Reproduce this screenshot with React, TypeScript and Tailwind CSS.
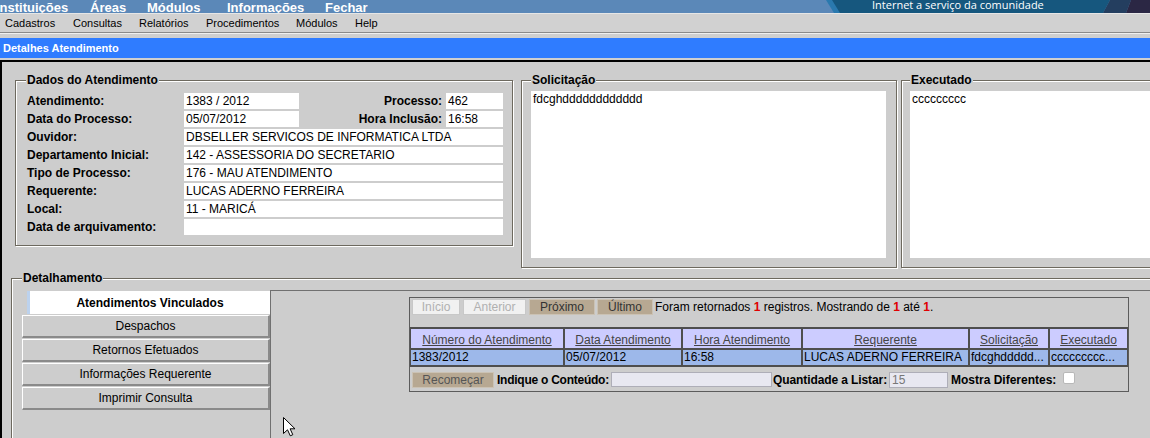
import React from "react";

const groove = "border border-[#6d695f] shadow-[inset_1px_1px_0_#ffffff,1px_1px_0_#ffffff]";

function Row({ label, children }: { label: string; children: React.ReactNode }) {
  return (
    <div className="flex h-[16px] items-center">
      <div className="w-[157px] text-[12px] font-bold leading-[16px] whitespace-nowrap">{label}</div>
      <div className="flex h-[16px] flex-1 items-center">{children}</div>
    </div>
  );
}

function Inp({ v, w }: { v: string; w?: string }) {
  return (
    <div className={`${w ?? "flex-1"} h-[16px] bg-white px-[2px] text-[12px] leading-[16px] whitespace-nowrap overflow-hidden`}>{v}</div>
  );
}

function Dados() {
  return (
    <fieldset className={`ml-[13px] w-[498px] shrink-0 ${groove} pl-[11px] pr-[9px] pb-[10px]`}>
      <legend className="-ml-[1px] bg-[#cdcdcd] px-[1px] text-[12px] font-bold leading-[14px]">Dados do Atendimento</legend>
      <div className="mt-[6px] flex flex-col gap-[2px]">
        <Row label="Atendimento:">
          <Inp v="1383 / 2012" w="w-[115px]" />
          <div className="flex-1 text-right text-[12px] font-bold">Processo:</div>
          <Inp v="462" w="ml-[4px] w-[57px]" />
        </Row>
        <Row label="Data do Processo:">
          <Inp v="05/07/2012" w="w-[115px]" />
          <div className="flex-1 text-right text-[12px] font-bold">Hora Inclusão:</div>
          <Inp v="16:58" w="ml-[4px] w-[57px]" />
        </Row>
        <Row label="Ouvidor:"><Inp v="DBSELLER SERVICOS DE INFORMATICA LTDA" /></Row>
        <Row label="Departamento Inicial:"><Inp v="142 - ASSESSORIA DO SECRETARIO" /></Row>
        <Row label="Tipo de Processo:"><Inp v="176 - MAU ATENDIMENTO" /></Row>
        <Row label="Requerente:"><Inp v="LUCAS ADERNO FERREIRA" /></Row>
        <Row label="Local:"><Inp v="11 - MARICÁ" /></Row>
        <Row label="Data de arquivamento:"><Inp v="" /></Row>
      </div>
    </fieldset>
  );
}

function TextBox({ title, text, cls }: { title: string; text: string; cls: string }) {
  return (
    <fieldset className={`${cls} shrink-0 ${groove} pb-[9px]`}>
      <legend className="bg-[#cdcdcd] px-[1px] text-[12px] font-bold leading-[14px]">{title}</legend>
      <div className="mt-[4px] h-[167px] bg-white px-[2px] pt-[1px] text-[12px] leading-[14px]">{text}</div>
    </fieldset>
  );
}

const tabBtn =
  "flex h-[23px] w-[248px] items-center justify-center text-[12px] border-t border-l border-r-2 border-b-2 border-t-white border-l-white border-r-[#8a8a8a] border-b-[#8a8a8a] bg-[#cdcdcd]";

const pgBase = "flex h-[16px] items-center justify-center border text-[12px]";
const tan = "bg-[#b7a892] border-[#cbc2b4] text-[#333333]";

const cols = [
  { h: "Número do Atendimento", d: "1383/2012", w: "w-[152px]" },
  { h: "Data Atendimento", d: "05/07/2012", w: "w-[116px]" },
  { h: "Hora Atendimento", d: "16:58", w: "w-[118px]" },
  { h: "Requerente", d: "LUCAS ADERNO FERREIRA", w: "w-[165px]" },
  { h: "Solicitação", d: "fdcghddddd...", w: "w-[78px]" },
  { h: "Executado", d: "ccccccccc...", w: "w-[77px]" },
];

function Grid() {
  return (
    <div className="ml-[138px] mt-[6px] w-[720px] border border-[#5c5c5c]">
      <div className="flex h-[29px] items-start pl-[2px] pt-[1px]">
        <span className={`${pgBase} w-[48px] bg-[#f1f1f1] border-[#c8c8c8] text-[#b0b0b0]`}>Início</span>
        <span className={`${pgBase} ml-[3px] w-[63px] bg-[#f1f1f1] border-[#c8c8c8] text-[#b0b0b0]`}>Anterior</span>
        <span className={`${pgBase} ml-[3px] w-[66px] ${tan}`}>Próximo</span>
        <span className={`${pgBase} ml-[2px] w-[56px] ${tan}`}>Último</span>
        <span className="ml-[2px] whitespace-nowrap text-[12px] leading-[16px]">
          Foram retornados <b className="text-[#e00000]">1</b> registros. Mostrando de <b className="text-[#e00000]">1</b> até{" "}
          <b className="text-[#e00000]">1</b>.
        </span>
      </div>
      <div className="flex flex-col gap-[2px] bg-[#4e4e4e] px-[1px] py-[2px]">
        <div className="flex h-[19px] gap-[2px]">
          {cols.map((c) => (
            <div key={c.h} className={`${c.w} flex items-center justify-center bg-[#ccccff] pt-[2px] text-[12px] text-[#444444] underline whitespace-nowrap`}>
              {c.h}
            </div>
          ))}
        </div>
        <div className="flex h-[15px] gap-[2px]">
          {cols.map((c) => (
            <div key={c.h} className={`${c.w} overflow-hidden bg-[#9db8ea] pl-[1px] text-[12px] leading-[15px] whitespace-nowrap`}>
              {c.d}
            </div>
          ))}
        </div>
      </div>
      <div className="flex h-[24px] items-start pl-[2px] pt-[5px] text-[12px]">
        <span className={`${pgBase} w-[82px] ${tan} text-[#555555]`}>Recomeçar</span>
        <span className="ml-[3px] w-[114px] whitespace-nowrap font-bold leading-[16px] tracking-[-0.25px]">Indique o Conteúdo:</span>
        <span className="h-[15px] w-[161px] border border-[#aeaeb8] bg-[#e8e8f1]" />
        <span className="ml-[1px] w-[116px] whitespace-nowrap font-bold leading-[16px] tracking-[-0.1px]">Quantidade a Listar:</span>
        <span className="h-[16px] w-[59px] border border-[#aeaeb8] bg-[#e8e8f1] pl-[2px] leading-[14px] text-[#777777]">15</span>
        <span className="ml-[3px] w-[110px] whitespace-nowrap font-bold leading-[16px]">Mostra Diferentes:</span>
        <span className="ml-[2px] h-[12px] w-[12px] rounded-[2px] border border-[#b8b8b8] bg-white" />
      </div>
    </div>
  );
}

function Detalhamento() {
  return (
    <fieldset className={`ml-[9px] mt-[3px] h-[220px] w-[1170px] shrink-0 ${groove} pl-[10px]`}>
      <legend className="bg-[#cdcdcd] px-[1px] text-[12px] font-bold leading-[14px]">Detalhamento</legend>
      <div className="mt-[5px] flex items-start">
        <div className="mt-[1px] flex w-[248px] shrink-0 flex-col gap-[1px]">
          <div className="ml-[5px] flex h-[23px] w-[243px] items-center justify-center border-l-[3px] border-[#bcd2ee] bg-white text-[12px] font-bold">
            Atendimentos Vinculados
          </div>
          <div className={tabBtn}>Despachos</div>
          <div className={tabBtn}>Retornos Efetuados</div>
          <div className={tabBtn}>Informações Requerente</div>
          <div className={tabBtn}>Imprimir Consulta</div>
        </div>
        <div className="h-[200px] flex-1 border-l border-t border-[#707070]">
          <Grid />
        </div>
      </div>
    </fieldset>
  );
}

export default function App() {
  return (
    <div className="relative h-[438px] w-[1150px] overflow-hidden bg-[#cdcdcd] font-['Liberation_Sans',Arial,sans-serif] text-black">
      <div className="relative h-[13px] overflow-hidden bg-[#5b88b8]">
        <svg className="absolute left-0 top-0" width="1150" height="13" viewBox="0 0 1150 13">
          <polygon points="826,0 834,0 842,13 834,13" fill="#2a79ae" />
          <polygon points="832,0 1110,0 1103,13 840,13" fill="#16577e" />
          <polygon points="1110,0 1131,0 1126,13 1103,13" fill="#243e5f" />
          <polygon points="1131,0 1150,0 1150,13 1126,13" fill="#2b2744" />
        </svg>
        <div className="relative flex h-[13px] items-start">
          <div className="flex w-[872px] pt-[1px] text-[13px] font-bold leading-[13px] text-white">
            <span className="-ml-[4px] w-[94px] whitespace-nowrap">Instituições</span>
            <span className="w-[57px]">Áreas</span>
            <span className="w-[80px]">Módulos</span>
            <span className="w-[98px]">Informações</span>
            <span>Fechar</span>
          </div>
          <span className="whitespace-nowrap font-['Open_Sans'] text-[11px] leading-[10px] text-white">Internet a serviço da comunidade</span>
        </div>
      </div>
      <div className="flex h-[20px] items-center border-b border-t border-b-[#8a8a8a] border-t-[#e6e6e6] bg-[#d1d1d1] pl-[5px] text-[11px]">
        <span className="w-[68px]">Cadastros</span>
        <span className="w-[66px]">Consultas</span>
        <span className="w-[67px]">Relatórios</span>
        <span className="w-[90px]">Procedimentos</span>
        <span className="w-[59px]">Módulos</span>
        <span>Help</span>
      </div>
      <div className="h-[5px] border-t border-[#f0f0f0] bg-[#cfcfcf]" />
      <div className="flex h-[20px] items-center bg-[#2f7cff] pl-[3px] text-[11px] font-bold text-white">Detalhes Atendimento</div>
      <div className="h-[2px] bg-[#cfcfcf]" />
      <div className="h-[378px] border-l-2 border-t-2 border-black pt-[11px]">
        <div className="flex items-start">
          <Dados />
          <TextBox title="Solicitação" text="fdcghdddddddddddd" cls="ml-[8px] w-[376px] pl-[9px] pr-[10px]" />
          <TextBox title="Executado" text="ccccccccc" cls="ml-[4px] w-[300px] pl-[8px] pr-[10px]" />
        </div>
        <Detalhamento />
      </div>
      <svg className="absolute left-[283px] top-[417px]" width="13" height="20" viewBox="0 0 13 20">
        <path d="M0.5 0.5 L0.5 16.5 L4.5 12.8 L7.3 18.8 L9.8 17.7 L7.1 11.8 L12 11.8 Z" fill="#ffffff" stroke="#000000" strokeWidth="1" />
      </svg>
    </div>
  );
}
